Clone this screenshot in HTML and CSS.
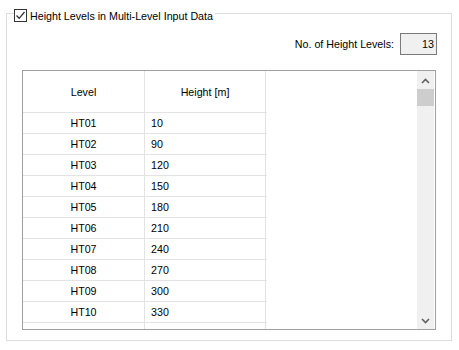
FILE: index.html
```html
<!DOCTYPE html>
<html lang="en">
<head>
    <meta charset="UTF-8">
    <meta name="viewport" content="width=device-width, initial-scale=1.0">
    <title>Height Levels</title>
    <link rel="stylesheet" href="styles.css">
</head>
<body>
    <div class="group">
        <label class="group-title">
            <span class="check">
                <svg width="11" height="11" viewBox="0 0 11 11"><path d="M1.5 5.5 L4.2 8.3 L9.5 2" fill="none" stroke="#333" stroke-width="1.3"/></svg>
            </span>
            Height Levels in Multi-Level Input Data
        </label>

        <div class="count-row">
            <span>No. of Height Levels:</span>
            <div class="count-box">13</div>
        </div>

        <div class="grid-box">
            <div class="grid">
                <div class="row head">
                    <div class="cell level">Level</div>
                    <div class="cell height center">Height [m]</div>
                </div>
                <div class="row"><div class="cell level">HT01</div><div class="cell height">10</div></div>
                <div class="row"><div class="cell level">HT02</div><div class="cell height">90</div></div>
                <div class="row"><div class="cell level">HT03</div><div class="cell height">120</div></div>
                <div class="row"><div class="cell level">HT04</div><div class="cell height">150</div></div>
                <div class="row"><div class="cell level">HT05</div><div class="cell height">180</div></div>
                <div class="row"><div class="cell level">HT06</div><div class="cell height">210</div></div>
                <div class="row"><div class="cell level">HT07</div><div class="cell height">240</div></div>
                <div class="row"><div class="cell level">HT08</div><div class="cell height">270</div></div>
                <div class="row"><div class="cell level">HT09</div><div class="cell height">300</div></div>
                <div class="row"><div class="cell level">HT10</div><div class="cell height">330</div></div>
                <div class="row"><div class="cell level"></div><div class="cell height"></div></div>
            </div>
            <div class="scrollbar">
                <svg class="arrow" width="9" height="6" viewBox="0 0 9 6"><path d="M1 5 L4.5 1.5 L8 5" fill="none" stroke="#606060" stroke-width="1.6"/></svg>
                <div class="thumb"></div>
                <div class="track"></div>
                <svg class="arrow" width="9" height="6" viewBox="0 0 9 6"><path d="M1 1 L4.5 4.5 L8 1" fill="none" stroke="#606060" stroke-width="1.6"/></svg>
            </div>
        </div>
    </div>
</body>
</html>
```

FILE: styles.css
```css
body {
    margin: 0;
    padding: 13px 7px 9px 6px;
    background: #fff;
    font-family: "Liberation Sans", Arial, sans-serif;
    font-size: 10.7px;
    color: #000;
}
.group {
    border: 1px solid #dcdcdc;
    height: 326px;
    display: flex;
    flex-direction: column;
}
.group-title {
    display: flex;
    align-items: center;
    gap: 3px;
    align-self: flex-start;
    margin: -5px 0 0 7px;
    padding-right: 2px;
    background: #fff;
    height: 13px;
}
.check {
    width: 11px;
    height: 11px;
    border: 1px solid #333;
    background: #fff;
    display: flex;
}
.count-row {
    display: flex;
    justify-content: flex-end;
    align-items: center;
    gap: 6px;
    margin: 11px 14px 0 0;
}
.count-box {
    width: 33px;
    height: 20px;
    line-height: 20px;
    border: 1px solid #7a7a7a;
    background: #f0f0f0;
    text-align: right;
    padding-right: 2px;
}
.grid-box {
    flex: 1;
    margin: 15px 15px 10px 15px;
    border: 1px solid #a0a0a0;
    display: flex;
    overflow: hidden;
}
.grid {
    flex: 1;
    overflow: hidden;
}
.row {
    display: flex;
    height: 20px;
    border-bottom: 1px solid #e3e3e3;
    width: 244px;
}
.row.head {
    height: 41px;
}
.cell {
    display: flex;
    align-items: center;
    border-right: 1px solid #e3e3e3;
}
.level {
    width: 121px;
    justify-content: center;
}
.height {
    width: 114px;
    padding-left: 6px;
}
.height.center {
    justify-content: center;
    padding-left: 0;
    width: 120px;
}
.scrollbar {
    width: 17px;
    margin-right: 1px;
    background: #f0f0f0;
    display: flex;
    flex-direction: column;
    align-items: center;
}
.arrow {
    margin: 7px 0 5px;
}
.thumb {
    width: 17px;
    height: 17px;
    background: #cdcdcd;
}
.track {
    flex: 1;
}
```
